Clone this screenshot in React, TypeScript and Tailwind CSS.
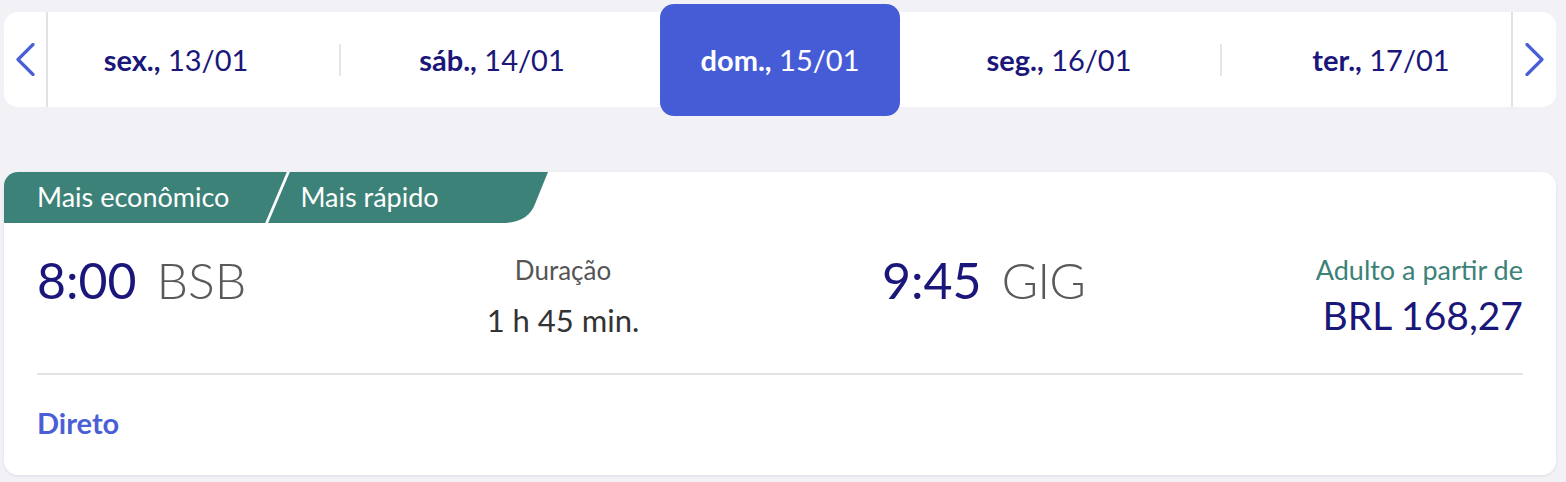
import React from 'react';

const font = { fontFamily: 'Lato, "Open Sans", sans-serif' };

function Chevron({ dir }: { dir: 'left' | 'right' }) {
  return (
    <svg width="20" height="33" viewBox="0 0 20 33" fill="none">
      <path
        d={dir === 'left' ? 'M18 1.5 L3 16.5 L18 31.5' : 'M2 1.5 L17 16.5 L2 31.5'}
        stroke="#4a5fd6"
        strokeWidth="3.2"
        strokeLinecap="round"
        strokeLinejoin="round"
      />
    </svg>
  );
}

function DayLabel({ day, date, active }: { day: string; date: string; active?: boolean }) {
  return (
    <span className={`text-[29px] whitespace-nowrap ${active ? 'text-white' : 'text-[#1b177a]'}`}>
      <span className="font-bold">{day}</span> {date}
    </span>
  );
}

export default function App() {
  return (
    <div className="min-h-[482px] w-[1566px] bg-[#f1f1f6] pl-[4px] pr-[10px] pt-[12px]" style={font}>
      {/* date strip */}
      <div className="flex h-[95px] items-center rounded-[14px] bg-white">
        <button className="flex h-full w-[44px] items-center justify-center border-r-2 border-[#e2e2e6]">
          <Chevron dir="left" />
        </button>
        <div className="flex h-full flex-1 items-center">
          <div className="ml-[8px] flex w-[240px] justify-center">
            <DayLabel day="sex.," date="13/01" />
          </div>
          <div className="ml-[43px] h-[32px] w-[2px] bg-[#e6e6ea]" />
          <div className="ml-[31px] flex w-[240px] justify-center">
            <DayLabel day="sáb.," date="14/01" />
          </div>
          <div className="ml-[48px] flex h-[112px] w-[240px] items-center justify-center rounded-[14px] bg-[#465cd6]">
            <DayLabel day="dom.," date="15/01" active />
          </div>
          <div className="ml-[39px] flex w-[240px] justify-center">
            <DayLabel day="seg.," date="16/01" />
          </div>
          <div className="ml-[41px] h-[32px] w-[2px] bg-[#e6e6ea]" />
          <div className="ml-[39px] flex w-[240px] justify-center">
            <DayLabel day="ter.," date="17/01" />
          </div>
        </div>
        <button className="flex h-full w-[45px] items-center justify-center border-l-2 border-[#e2e2e6]">
          <Chevron dir="right" />
        </button>
      </div>

      {/* flight card */}
      <div className="mt-[65px] h-[303px] overflow-hidden rounded-[14px] bg-white shadow-[0_1px_3px_rgba(40,40,80,0.10)]">
        <div className="flex h-[51px]">
          <div className="flex h-full items-center bg-[#3c8278] text-[27px] text-white">
            <span className="pl-[33px]">Mais econômico</span>
            <span className="ml-[47px] h-full w-[3px] skew-x-[-23deg] bg-white" />
            <span className="ml-[21px] pr-[60px]">Mais rápido</span>
          </div>
          <svg width="50" height="51" viewBox="0 0 50 51" className="-ml-px">
            <path d="M0 0 H50 L37 32 Q30 51 4 51 H0 Z" fill="#3c8278" />
          </svg>
        </div>

        <div className="px-[33px]">
          <div className="flex items-start pt-[32px]">
            <div className="flex w-[401px] items-baseline gap-[20px] text-[50px] leading-none">
              <span className="text-[#1b177a]">8:00</span>
              <span className="font-light text-[#5a5a5a]">BSB</span>
            </div>
            <div className="flex w-[250px] flex-col items-center">
              <span className="text-[26px] leading-[30px] text-[#555]">Duração</span>
              <span className="mt-[18px] text-[31px] leading-[34px] text-[#333]">1 h 45 min.</span>
            </div>
            <div className="ml-[194px] flex items-baseline gap-[20px] text-[50px] leading-none">
              <span className="text-[#1b177a]">9:45</span>
              <span className="font-light tracking-[-1px] text-[#5a5a5a]">GIG</span>
            </div>
            <div className="flex flex-1 flex-col items-end">
              <span className="text-[27px] leading-[30px] text-[#3c8278]">Adulto a partir de</span>
              <span className="mt-[9px] text-[39px] leading-[42px] text-[#1b177a]">BRL 168,27</span>
            </div>
          </div>
          <div className="mt-[36px] h-[2px] bg-[#e3e3e6]" />
          <div className="pt-[26px] text-[29px] font-bold text-[#4a5fd6]">Direto</div>
        </div>
      </div>
    </div>
  );
}
